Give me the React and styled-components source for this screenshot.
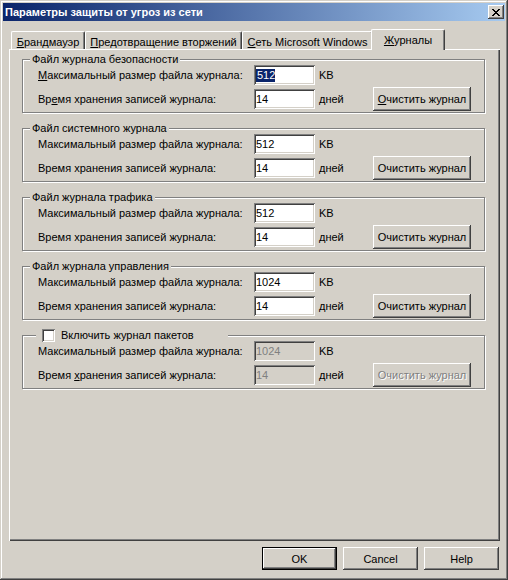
import React from 'react';
import styled, { createGlobalStyle } from 'styled-components';

const Global = createGlobalStyle`
  html, body { margin: 0; padding: 0; background: #D4D0C8; }
  body { font-family: "Liberation Sans", Arial, sans-serif; font-size: 11px; color: #000; }
  * { box-sizing: border-box; }
`;

const Window = styled.div`
  width: 508px;
  height: 580px;
  background: #D4D0C8;
  padding: 3px;
  display: flex;
  flex-direction: column;
  box-shadow: inset -1px -1px #404040, inset 1px 1px #D4D0C8,
    inset -2px -2px #808080, inset 2px 2px #ffffff;
`;

const TitleBar = styled.div`
  height: 18px;
  display: flex;
  align-items: center;
  justify-content: space-between;
  padding: 0 1px 0 2px;
  background: linear-gradient(to right, #0A246A, #A6CAF0);
`;

const TitleText = styled.span`
  color: #fff;
  font-weight: bold;
  font-size: 11px;
  line-height: 18px;
`;

const CloseBox = styled.div`
  width: 16px;
  height: 14px;
  background: #D4D0C8;
  display: flex;
  align-items: center;
  justify-content: center;
  box-shadow: inset -1px -1px #404040, inset 1px 1px #fff,
    inset -2px -2px #808080, inset 2px 2px #D4D0C8;
`;

const Body = styled.div`
  flex: 1;
  display: flex;
  flex-direction: column;
  padding: 0 5px 0 6px;
`;

const TabStrip = styled.div`
  display: flex;
  align-items: flex-end;
  height: 20px;
  margin-top: 8px;
  padding-left: 2px;
`;

const Tab = styled.div`
  position: relative;
  z-index: ${p => (p.$active ? 2 : 1)};
  width: ${p => p.$w}px;
  height: ${p => (p.$active ? 21 : 18)}px;
  margin: 0 ${p => (p.$active ? -2 : 0)}px ${p => (p.$active ? -1 : 0)}px
    ${p => (p.$active ? -2 : 0)}px;
  background: #D4D0C8;
  border-top: 1px solid #fff;
  border-left: 1px solid #fff;
  border-right: 1px solid #404040;
  border-radius: 2px 2px 0 0;
  box-shadow: inset -1px 0 #808080;
  display: flex;
  align-items: center;
  justify-content: center;
  padding-top: ${p => (p.$active ? 0 : 2)}px;
  white-space: nowrap;
`;

const Panel = styled.div`
  height: 492px;
  padding: 10px 15px 0 13px;
  box-shadow: inset 1px 1px #fff, inset -1px -1px #404040, inset -2px -2px #808080;
`;

const Group = styled.div`
  position: relative;
  border: 1px solid #808080;
  box-shadow: inset 1px 1px #fff, 1px 1px #fff;
  padding: 5px 13px 1px 15px;
  display: grid;
  grid-template-columns: 216px 61px 58px 98px;
  grid-template-rows: 20px 24px;
  row-gap: 2px;
  align-items: center;
  & + & { margin-top: 15px; }
`;

const GroupTitle = styled.div`
  position: absolute;
  top: -7px;
  left: ${p => (p.$check ? 13 : 7)}px;
  height: 13px;
  line-height: 13px;
  padding: ${p => (p.$check ? '0 34px 0 6px' : '0 2px')};
  background: #D4D0C8;
  display: flex;
  align-items: center;
  gap: 6px;
  white-space: nowrap;
`;

const CheckBox = styled.span`
  width: 13px;
  height: 13px;
  background: #fff;
  box-shadow: inset 1px 1px #808080, inset -1px -1px #fff,
    inset 2px 2px #404040, inset -2px -2px #D4D0C8;
`;

const Label = styled.span`
  white-space: nowrap;
`;

const Field = styled.div`
  width: 61px;
  height: 20px;
  padding: 0 2px;
  display: flex;
  align-items: center;
  background: ${p => (p.$disabled ? '#D4D0C8' : '#fff')};
  color: ${p => (p.$disabled ? '#808080' : '#000')};
  box-shadow: inset 1px 1px #808080, inset -1px -1px #fff,
    inset 2px 2px #404040, inset -2px -2px #D4D0C8;
`;

const Selected = styled.span`
  background: #0A246A;
  color: #fff;
  line-height: 13px;
  padding: 0 0 0 1px;
`;

const Unit = styled.span`
  padding-left: 4px;
`;

const Button = styled.button`
  width: ${p => p.$w}px;
  height: ${p => p.$h}px;
  padding: 0;
  border: 0;
  font: inherit;
  font-size: 11px;
  background: #D4D0C8;
  color: ${p => (p.disabled ? '#808080' : '#000')};
  text-shadow: ${p => (p.disabled ? '1px 1px #fff' : 'none')};
  box-shadow: ${p =>
    p.$default
      ? 'inset 0 0 0 1px #000, inset -2px -2px #404040, inset 2px 2px #fff, inset -3px -3px #808080, inset 3px 3px #D4D0C8'
      : 'inset -1px -1px #404040, inset 1px 1px #fff, inset -2px -2px #808080, inset 2px 2px #D4D0C8'};
`;

const Footer = styled.div`
  display: flex;
  justify-content: flex-end;
  gap: 6px;
  margin-top: 6px;
  padding-right: 1px;
`;

const U = styled.u`
  text-decoration: underline;
  text-underline-offset: 1px;
`;

const XGlyph = () => {
  const rows = [
    [0, 1, 6, 7],
    [1, 2, 5, 6],
    [2, 3, 4, 5],
    [3, 4],
    [2, 3, 4, 5],
    [1, 2, 5, 6],
    [0, 1, 6, 7],
  ];
  return (
    <svg width="8" height="7" viewBox="0 0 8 7" shapeRendering="crispEdges">
      {rows.flatMap((r, y) => r.map(x => <rect key={`${x}-${y}`} x={x} y={y} width="1" height="1" fill="#000" />))}
    </svg>
  );
};

const groups = [
  {
    title: 'Файл журнала безопасности',
    size: '512',
    selected: true,
    l1: <><U>М</U>аксимальный размер файла журнала:</>,
    l2: <>Вр<U>е</U>мя хранения записей журнала:</>,
    btn: <><U>О</U>чистить журнал</>,
  },
  {
    title: 'Файл системного журнала',
    size: '512',
    l1: <>Максимальный размер файла журнала:</>,
    l2: <>Время хранения записей журнала:</>,
    btn: <>Очистить журнал</>,
  },
  {
    title: 'Файл журнала трафика',
    size: '512',
    l1: <>Максимальный размер файла журнала:</>,
    l2: <>Время хранения записей журнала:</>,
    btn: <>Очистить журнал</>,
  },
  {
    title: 'Файл журнала управления',
    size: '1024',
    l1: <>Максимальный размер файла журнала:</>,
    l2: <>Время хранения записей журнала:</>,
    btn: <>Очистить журнал</>,
  },
  {
    title: 'Включить журнал пакетов',
    check: true,
    disabled: true,
    size: '1024',
    l1: <>Максимальный размер файла журнала:</>,
    l2: <>Время <U>х</U>ранения записей журнала:</>,
    btn: <>Очистить журнал</>,
  },
];

export default function App() {
  return (
    <>
      <Global />
      <Window>
        <TitleBar>
          <TitleText>Параметры защиты от угроз из сети</TitleText>
          <CloseBox><XGlyph /></CloseBox>
        </TitleBar>
        <Body>
          <TabStrip>
            <Tab $w={74}><U>Б</U>рандмауэр</Tab>
            <Tab $w={157}><U>П</U>редотвращение вторжений</Tab>
            <Tab $w={131}><U>С</U>еть Microsoft Windows</Tab>
            <Tab $w={74} $active><U>Ж</U>урналы</Tab>
          </TabStrip>
          <Panel>
            {groups.map((g, i) => (
              <Group key={i}>
                <GroupTitle $check={g.check}>
                  {g.check && <CheckBox />}
                  {g.title}
                </GroupTitle>
                <Label>{g.l1}</Label>
                <Field $disabled={g.disabled}>
                  {g.selected ? <Selected>{g.size}</Selected> : g.size}
                </Field>
                <Unit>KB</Unit>
                <span />
                <Label>{g.l2}</Label>
                <Field $disabled={g.disabled}>14</Field>
                <Unit>дней</Unit>
                <Button $w={98} $h={24} disabled={g.disabled}>{g.btn}</Button>
              </Group>
            ))}
          </Panel>
          <Footer>
            <Button $w={75} $h={23} $default>OK</Button>
            <Button $w={75} $h={23}>Cancel</Button>
            <Button $w={75} $h={23}>Help</Button>
          </Footer>
        </Body>
      </Window>
    </>
  );
}
